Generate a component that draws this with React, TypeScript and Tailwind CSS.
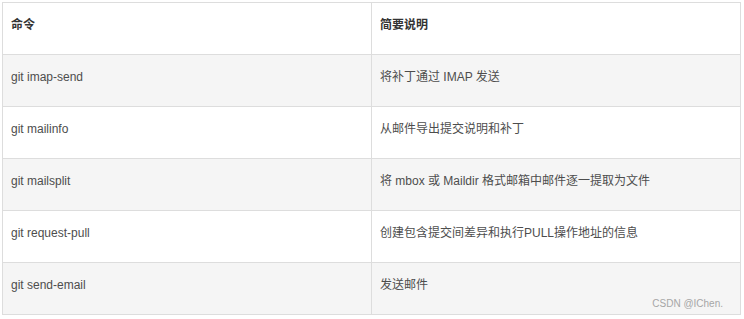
import React from "react";

const rows: [string, string][] = [
  ["git imap-send", "将补丁通过 IMAP 发送"],
  ["git mailinfo", "从邮件导出提交说明和补丁"],
  ["git mailsplit", "将 mbox 或 Maildir 格式邮箱中邮件逐一提取为文件"],
  ["git request-pull", "创建包含提交间差异和执行PULL操作地址的信息"],
  ["git send-email", "发送邮件"],
];

const font = {
  fontFamily: '"Liberation Sans", Arial, "Noto Sans CJK SC", sans-serif',
};

export default function App() {
  return (
    <div className="w-[744px] h-[319px] bg-white pt-[2px] pl-[2px]" style={font}>
      <div className="relative w-[739px] border-t border-l border-r border-[#dddddd] text-[12px] leading-[20px] text-[#4d4d4d]">
        <div className="grid grid-cols-[369px_1fr] h-[52px] border-b border-[#dddddd] bg-white">
          <div className="border-r border-[#dddddd] pl-2 pt-[12px] font-semibold text-[#333333]">命令</div>
          <div className="pl-2 pt-[12px] font-semibold text-[#333333]">简要说明</div>
        </div>
        {rows.map(([cmd, desc], i) => (
          <div
            key={cmd}
            className={
              i % 2 === 0
                ? "grid grid-cols-[369px_1fr] h-[52px] border-b border-[#dddddd] bg-[#f5f5f5]"
                : "grid grid-cols-[369px_1fr] h-[52px] border-b border-[#dddddd] bg-white"
            }
          >
            <div className="border-r border-[#dddddd] pl-2 pt-[12px]">{cmd}</div>
            <div className="pl-2 pt-[12px]">{desc}</div>
          </div>
        ))}
        <div className="absolute right-[17px] bottom-[5px] text-[10px] leading-[12px] text-[#a6a6a6]">
          CSDN @IChen.
        </div>
      </div>
    </div>
  );
}
